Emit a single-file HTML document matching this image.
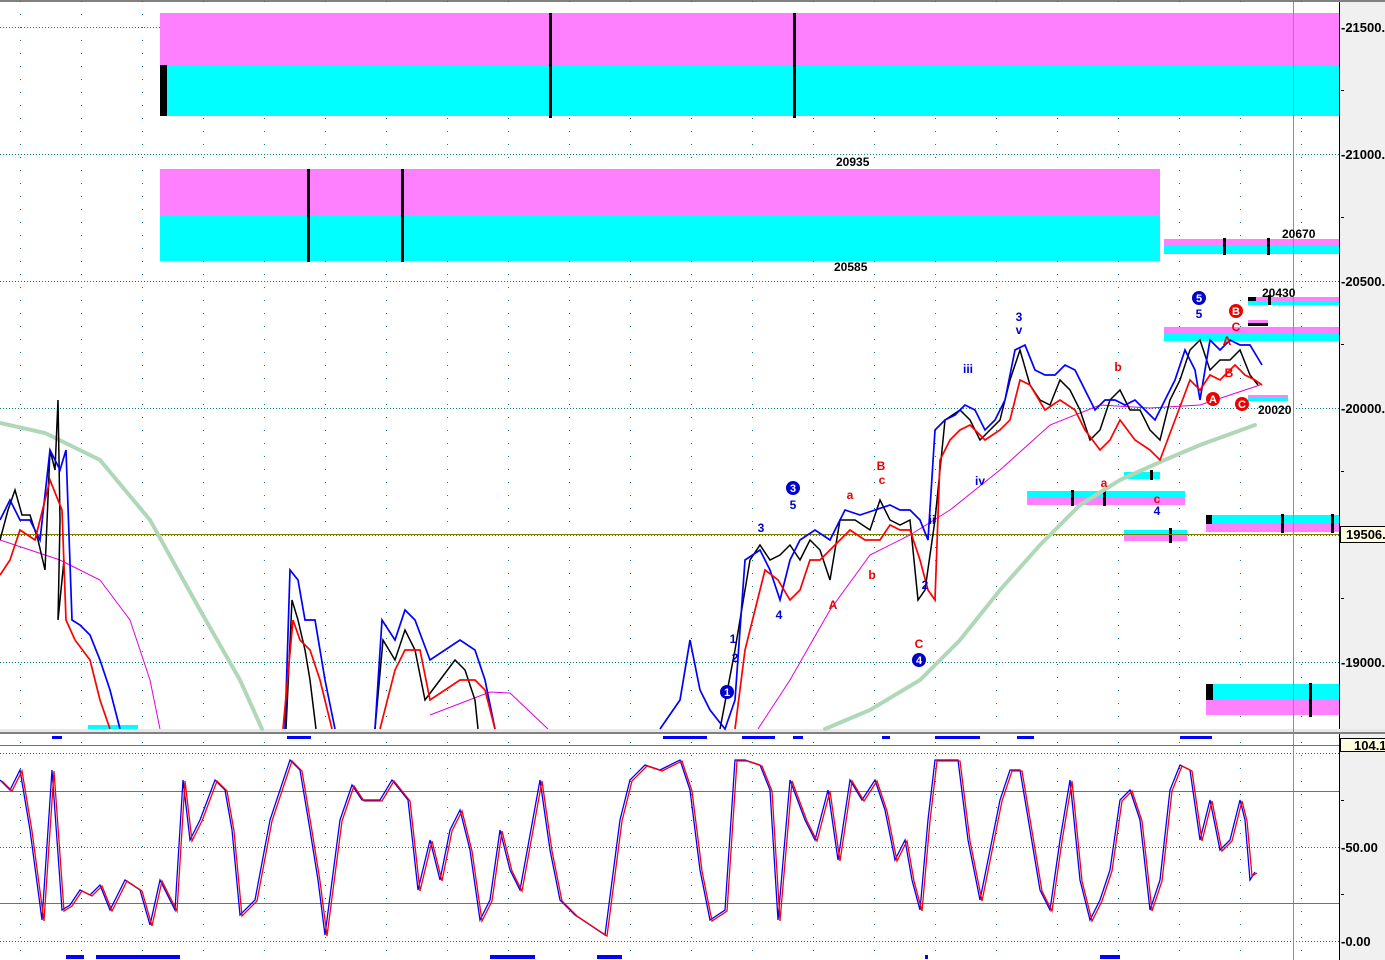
<!DOCTYPE html>
<html><head><meta charset="utf-8"><style>
html,body{margin:0;padding:0;background:#fff;overflow:hidden}
svg{display:block}
text{font-family:"Liberation Sans",sans-serif;font-weight:bold}
</style></head><body>
<svg width="1385" height="960" viewBox="0 0 1385 960" xmlns="http://www.w3.org/2000/svg">
<defs>
<pattern id="vd" x="20" y="0" width="61" height="13" patternUnits="userSpaceOnUse"><rect x="0" y="1" width="1" height="1" fill="#008080"/></pattern>
</defs>
<rect width="1385" height="960" fill="#fff"/>
<rect x="0" y="0" width="1385" height="2" fill="#808080"/>
<rect x="0" y="0" width="1339" height="729" fill="url(#vd)"/>
<rect x="0" y="737" width="1339" height="223" fill="url(#vd)"/>
<rect x="1340" y="2" width="45" height="958" fill="#f0f0f0"/>
<rect x="1339" y="2" width="1" height="958" fill="#000"/>
<rect x="0" y="729" width="1385" height="3" fill="#e8e8e8"/>
<rect x="0" y="732" width="1385" height="2" fill="#808080"/>
<g stroke="#008080" stroke-width="1" stroke-dasharray="1,2">
<line x1="0" y1="27.5" x2="1339" y2="27.5"/><line x1="0" y1="154.5" x2="1339" y2="154.5"/>
<line x1="0" y1="281.5" x2="1339" y2="281.5"/><line x1="0" y1="408.5" x2="1339" y2="408.5"/>
<line x1="0" y1="535.5" x2="1339" y2="535.5"/><line x1="0" y1="662.5" x2="1339" y2="662.5"/>
<line x1="0" y1="753.5" x2="1339" y2="753.5"/><line x1="0" y1="847.5" x2="1339" y2="847.5"/>
<line x1="0" y1="941.5" x2="1339" y2="941.5"/>
</g>
<rect x="160" y="13" width="1179" height="52" fill="#ff80ff"/><rect x="160" y="65" width="1179" height="51" fill="#00ffff"/>
<rect x="160" y="65" width="7" height="51" fill="#000"/>
<rect x="549" y="13" width="3" height="105" fill="#000"/><rect x="793" y="13" width="3" height="105" fill="#000"/>
<rect x="160" y="169" width="1000" height="46" fill="#ff80ff"/><rect x="160" y="215" width="1000" height="46" fill="#00ffff"/>
<rect x="307" y="169" width="3" height="93" fill="#000"/><rect x="401" y="169" width="3" height="93" fill="#000"/>
<rect x="1164" y="239" width="175" height="7" fill="#ff80ff"/><rect x="1164" y="246" width="175" height="8" fill="#00ffff"/>
<rect x="1223" y="238" width="3" height="17" fill="#000"/><rect x="1267" y="238" width="3" height="17" fill="#000"/>
<rect x="1248" y="297" width="91" height="4" fill="#ff80ff"/><rect x="1248" y="301" width="91" height="4" fill="#00ffff"/>
<rect x="1248" y="297" width="8" height="4" fill="#000"/><rect x="1268" y="295" width="3" height="10" fill="#000"/>
<rect x="1248" y="320" width="20" height="4" fill="#ff80ff"/><rect x="1248" y="323" width="20" height="3" fill="#000"/>
<rect x="1164" y="327" width="175" height="6" fill="#ff80ff"/><rect x="1164" y="333" width="175" height="8" fill="#00ffff"/>
<rect x="1248" y="395" width="40" height="3" fill="#ff80ff"/><rect x="1248" y="398" width="40" height="3" fill="#00ffff"/>
<rect x="1027" y="491" width="158" height="7" fill="#00ffff"/><rect x="1027" y="498" width="158" height="7" fill="#ff80ff"/>
<rect x="1071" y="490" width="3" height="16" fill="#000"/><rect x="1103" y="490" width="3" height="16" fill="#000"/>
<rect x="1124" y="472" width="36" height="7" fill="#00ffff"/><rect x="1150" y="470" width="3" height="10" fill="#000"/>
<rect x="1124" y="530" width="63" height="5" fill="#00ffff"/><rect x="1124" y="535" width="63" height="6" fill="#ff80ff"/>
<rect x="1169" y="528" width="3" height="15" fill="#000"/>
<rect x="1206" y="515" width="133" height="9" fill="#00ffff"/><rect x="1206" y="524" width="133" height="8" fill="#ff80ff"/>
<rect x="1206" y="515" width="6" height="9" fill="#000"/>
<rect x="1281" y="514" width="3" height="19" fill="#000"/><rect x="1331" y="514" width="3" height="19" fill="#000"/>
<rect x="1206" y="684" width="133" height="16" fill="#00ffff"/><rect x="1206" y="700" width="133" height="15" fill="#ff80ff"/>
<rect x="1206" y="684" width="7" height="16" fill="#000"/><rect x="1309" y="683" width="3" height="34" fill="#000"/>
<rect x="88" y="725" width="50" height="4" fill="#00ffff"/>
<line x1="0" y1="534.5" x2="1339" y2="534.5" stroke="#808000" stroke-width="1"/>
<rect x="1293" y="2" width="1" height="958" fill="#a0a000"/>
<g stroke="#808000" stroke-width="1">
<line x1="0" y1="745.5" x2="1339" y2="745.5"/><line x1="0" y1="791.5" x2="1339" y2="791.5"/><line x1="0" y1="903.5" x2="1339" y2="903.5"/>
</g>
<g fill="none" stroke="#b0d8b8" stroke-width="4" stroke-linecap="round">
<polyline points="0,423 45,433 100,460 150,520 200,610 240,680 262,729"/>
<polyline points="825,729 870,710 920,680 960,640 1000,590 1040,545 1080,505 1120,480 1160,462 1200,445 1255,425"/>
</g>
<g fill="none" stroke="#e000e0" stroke-width="1">
<polyline points="0,540 60,560 100,580 130,620 150,680 160,729"/>
<polyline points="430,715 490,692 510,693 548,729"/>
<polyline points="758,729 790,680 830,610 870,555 910,535 950,510 1000,470 1050,425 1100,405 1150,408 1200,405 1260,385"/>
</g>
<g fill="none" stroke="#000" stroke-width="1.5">
<polyline points="0,540 8,510 15,490 22,515 30,515 38,540 45,570 50,450 55,470 58,400 60,520 58,620 64,560"/>
<polyline points="286,729 292,600 298,620 305,650 310,680 316,729"/>
<polyline points="375,729 383,640 395,660 405,630 415,650 425,700 440,680 455,660 465,670 475,700 478,729"/>
<polyline points="720,729 735,650 750,560 760,545 770,560 780,555 790,545 800,560 810,540 820,550 830,580 840,520 855,520 870,530 880,500 890,520 900,525 910,520 918,600 925,590 935,520 945,420 960,410 970,420 980,440 990,430 1000,420 1010,380 1020,350 1030,385 1040,400 1050,405 1060,380 1070,390 1080,410 1090,440 1100,430 1110,400 1120,390 1130,410 1140,410 1150,430 1160,440 1170,400 1180,380 1190,350 1200,340 1210,370 1220,360 1230,360 1240,350 1250,375 1258,385"/>
</g>
<g fill="none" stroke="#0000ff" stroke-width="1.7">
<polyline points="0,520 10,500 20,520 30,520 40,540 50,450 60,470 66,450 72,620 80,625 90,635 100,660 110,690 120,729"/>
<polyline points="285,729 290,570 298,580 305,620 315,620 325,680 335,729"/>
<polyline points="375,729 382,620 395,640 405,610 415,620 430,660 445,650 460,640 475,650 485,680 495,729"/>
<polyline points="660,729 680,700 690,640 700,690 710,710 725,729 735,700 745,560 760,550 770,570 780,600 790,560 800,540 815,530 830,540 845,510 860,515 875,510 890,505 900,510 910,510 920,520 928,540 935,430 945,420 955,415 965,405 975,410 985,430 995,420 1005,400 1015,350 1025,345 1035,370 1045,375 1055,375 1065,365 1075,370 1085,390 1095,410 1105,400 1115,400 1125,405 1135,400 1145,410 1155,420 1165,400 1175,380 1185,350 1195,370 1200,400 1210,340 1220,350 1230,340 1240,345 1250,345 1262,365"/>
</g>
<g fill="none" stroke="#ff0000" stroke-width="1.7">
<polyline points="0,575 10,560 20,530 35,540 50,480 62,510 66,620 75,640 90,660 100,700 110,729"/>
<polyline points="283,729 293,620 300,640 310,650 320,680 332,729"/>
<polyline points="380,729 395,670 405,650 420,650 430,700 445,690 460,680 475,680 485,690 495,729"/>
<polyline points="735,729 745,650 755,610 765,570 778,580 790,600 800,590 810,560 820,560 835,545 850,530 865,540 880,540 890,525 900,530 910,530 920,560 928,590 935,600 940,460 950,440 960,430 970,425 985,440 1000,430 1010,420 1020,380 1030,385 1045,410 1060,400 1075,410 1085,430 1100,450 1110,440 1120,420 1135,440 1150,450 1160,460 1175,420 1190,380 1200,390 1210,375 1220,380 1235,365 1245,375 1255,380 1262,385"/>
</g>
<polyline fill="none" stroke="#0000ff" stroke-width="1.3" points="0,780 10,790 20,770 30,830 42,920 52,770 62,910 70,905 80,890 90,895 100,885 110,910 125,880 140,890 150,925 160,880 175,910 183,780 190,840 200,820 215,780 225,790 232,830 240,915 255,900 270,820 290,760 300,770 310,830 318,880 325,935 340,820 352,785 362,800 380,800 392,780 408,800 418,890 430,840 440,880 450,830 460,810 470,850 480,920 490,900 500,830 510,870 520,890 540,780 550,850 560,900 575,915 590,925 605,935 620,820 630,780 645,765 660,770 680,760 690,790 700,870 710,920 725,910 735,760 745,760 760,765 770,790 778,920 790,780 805,820 815,840 828,790 838,860 850,780 862,800 875,780 885,810 895,860 905,840 912,880 920,910 928,820 935,760 945,760 958,760 968,840 980,900 990,850 1000,800 1010,770 1020,770 1030,830 1040,890 1050,910 1060,840 1070,780 1080,880 1090,920 1100,900 1110,870 1120,800 1130,790 1140,820 1150,910 1160,880 1170,790 1180,765 1190,770 1200,840 1210,800 1220,850 1230,840 1240,800 1245,820 1250,880 1255,872"/>
<polyline fill="none" stroke="#ff0000" stroke-width="1.3" transform="translate(2,1)" points="0,780 10,790 20,770 30,830 42,920 52,770 62,910 70,905 80,890 90,895 100,885 110,910 125,880 140,890 150,925 160,880 175,910 183,780 190,840 200,820 215,780 225,790 232,830 240,915 255,900 270,820 290,760 300,770 310,830 318,880 325,935 340,820 352,785 362,800 380,800 392,780 408,800 418,890 430,840 440,880 450,830 460,810 470,850 480,920 490,900 500,830 510,870 520,890 540,780 550,850 560,900 575,915 590,925 605,935 620,820 630,780 645,765 660,770 680,760 690,790 700,870 710,920 725,910 735,760 745,760 760,765 770,790 778,920 790,780 805,820 815,840 828,790 838,860 850,780 862,800 875,780 885,810 895,860 905,840 912,880 920,910 928,820 935,760 945,760 958,760 968,840 980,900 990,850 1000,800 1010,770 1020,770 1030,830 1040,890 1050,910 1060,840 1070,780 1080,880 1090,920 1100,900 1110,870 1120,800 1130,790 1140,820 1150,910 1160,880 1170,790 1180,765 1190,770 1200,840 1210,800 1220,850 1230,840 1240,800 1245,820 1250,875 1255,872"/>
<g fill="#0000ff">
<rect x="52" y="736" width="10" height="3"/><rect x="287" y="736" width="24" height="3"/><rect x="663" y="736" width="44" height="3"/>
<rect x="742" y="736" width="33" height="3"/><rect x="793" y="736" width="10" height="3"/><rect x="882" y="736" width="8" height="3"/>
<rect x="935" y="736" width="45" height="3"/><rect x="1017" y="736" width="17" height="3"/><rect x="1180" y="736" width="32" height="3"/>
<rect x="66" y="955" width="18" height="4"/><rect x="96" y="955" width="84" height="4"/><rect x="490" y="955" width="45" height="4"/>
<rect x="597" y="955" width="25" height="4"/><rect x="925" y="955" width="3" height="4"/><rect x="1100" y="955" width="20" height="4"/>
</g>
<g font-size="12" fill="#000">
<text x="836" y="166">20935</text><text x="834" y="271">20585</text>
<text x="1282" y="238">20670</text><text x="1262" y="297">20430</text><text x="1258" y="414">20020</text>
</g>
<g font-size="12" fill="#0000cc" text-anchor="middle">
<text x="793" y="509">5</text><text x="761" y="532">3</text><text x="779" y="619">4</text>
<text x="733" y="643">1</text><text x="735" y="662">2</text>
<text x="968" y="373">iii</text><text x="1019" y="321">3</text><text x="1019" y="334">v</text>
<text x="980" y="485">iv</text><text x="932" y="524">ii</text><text x="925" y="589">2</text>
<text x="1199" y="318">5</text><text x="1157" y="515">4</text>
</g>
<g font-size="11" fill="#fff" text-anchor="middle">
<circle cx="793" cy="488" r="7" fill="#0000cc"/><text x="793" y="492">3</text>
<circle cx="727" cy="692" r="7" fill="#0000cc"/><text x="727" y="696">1</text>
<circle cx="919" cy="660" r="7" fill="#0000cc"/><text x="919" y="664">4</text>
<circle cx="1199" cy="298" r="7" fill="#0000cc"/><text x="1199" y="302">5</text>
<circle cx="1236" cy="311" r="7" fill="#ee0000"/><text x="1236" y="315">B</text>
<circle cx="1213" cy="399" r="7" fill="#ee0000"/><text x="1213" y="403">A</text>
<circle cx="1242" cy="404" r="7" fill="#ee0000"/><text x="1242" y="408">C</text>
</g>
<g font-size="12" fill="#ee0000" text-anchor="middle">
<text x="881" y="470">B</text><text x="882" y="484">c</text><text x="850" y="499">a</text><text x="872" y="579">b</text>
<text x="833" y="609">A</text><text x="919" y="648">C</text><text x="1118" y="371">b</text><text x="1104" y="487">a</text>
<text x="1157" y="503">c</text><text x="1236" y="331">C</text><text x="1227" y="345">A</text><text x="1229" y="377">B</text>
</g>
<g font-size="13" fill="#000">
<text x="1341" y="32">-21500.</text><text x="1341" y="159">-21000.</text><text x="1341" y="286">-20500.</text>
<text x="1341" y="413">-20000.</text><text x="1341" y="667">-19000.</text>
<text x="1341" y="852">-50.00</text><text x="1341" y="946">-0.00</text>
</g>
<g fill="#000">
<rect x="1341" y="90" width="3" height="1"/><rect x="1341" y="217" width="3" height="1"/><rect x="1341" y="344" width="3" height="1"/>
<rect x="1341" y="471" width="3" height="1"/><rect x="1341" y="598" width="3" height="1"/><rect x="1341" y="800" width="3" height="1"/><rect x="1341" y="894" width="3" height="1"/>
</g>
<rect x="1340.5" y="526.5" width="45" height="16" fill="#ffffe0" stroke="#000"/>
<text x="1346" y="539" font-size="13">19506.</text>
<rect x="1340.5" y="738.5" width="45" height="13" fill="#ffffe0" stroke="#000"/>
<text x="1354" y="750" font-size="13">104.1</text>
</svg>
</body></html>
